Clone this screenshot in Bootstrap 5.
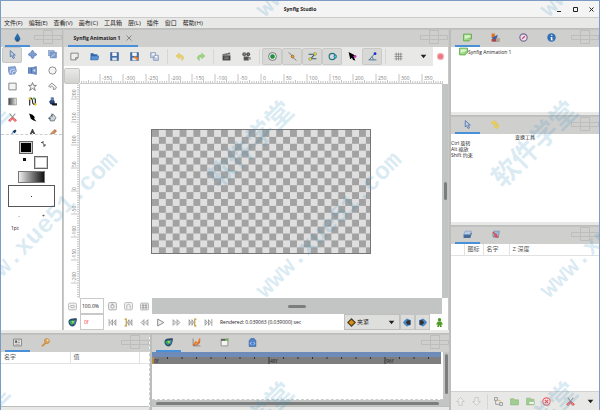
<!DOCTYPE html>
<html lang="zh-CN">
<head>
<meta charset="utf-8">
<meta name="viewport" content="width=device-width, initial-scale=1">
<title>Synfig Studio</title>
<link href="https://cdn.jsdelivr.net/npm/bootstrap@5.3.0/dist/css/bootstrap.min.css" rel="stylesheet">
<style>
:root{--line:#bcbebc;--tabs:#cfcfce;--bar:#e8e8e6;--accent:#4a90d9;--soft:#c3c5c4}
body{font:5px/6px "Open Sans","Noto Sans CJK SC",sans-serif;color:#1c2022;background:#fff}
button,input,select{font:inherit;color:inherit}
button{border:0;background:none;padding:0;display:flex;align-items:center;justify-content:center}
svg{display:block;flex:none}
.ic{width:9px;height:9px;overflow:visible}
.win{border:1px solid #7c9cc3;border-bottom:0}
.titlebar{height:16px;background:#f4f4f4}
.titlebar h1{font-size:5px;font-weight:700;line-height:16px}
.winbtns{gap:7px;padding-right:3px}
.winbtns button{width:9px;height:16px}
.menubar{height:12px;font-size:6px;background:var(--bar);border-top:1px solid #ccc;border-bottom:1px solid var(--line);padding-left:3px;gap:6px}
.docktabs{height:18px;background:var(--tabs);padding-left:4px;gap:3px;border-top:1px solid #c2c2c2}
.docktabs .tab{width:25px;border-bottom:2px solid transparent}
.docktabs .tab.on{border-color:var(--accent)}
.docktabs .doc{width:70px;font-weight:700;gap:6px;border-bottom:2px solid var(--accent)}
.side{width:62px;border-right:1px solid var(--line)}
.toolclip{height:88px;overflow:hidden;border-bottom:1px dashed #ccc}
.tools{height:94px;display:grid;grid-template-columns:repeat(3,20px);grid-auto-rows:1fr;padding-left:1px}
.on-tool{background:#d8d8d6;border:1px solid #c6c6c4;border-radius:2px}
.prev{padding:6px 6px 0;gap:2px}
.sw{width:14px;height:13px;border:1px solid #666;box-shadow:inset 0 0 0 1px #ccc}
.sw.k{background:#000}.sw.w{background:#fff}
.grad{width:27px;height:12px;border:1px solid #777;background:linear-gradient(90deg,#eee,#111)}
.brush{width:47px;height:22px;border:1px solid #555}
.toolbar-main{height:19px;background:var(--bar)}
.toolbar-main button{width:20px;height:17px}
.toolbar-main .on{background:#d8d8d6;border:1px solid #c9c9c7;border-radius:2px}
.vsep{width:6px;display:flex;justify-content:center}
.vsep::after{content:"";width:1px;height:15px;background:#d6d6d4}
.corner{width:16px;height:16px;background:linear-gradient(#e9e9e9,#d2d2d0);border:1px solid #c6c6c4;border-radius:2px}
.rulx{height:18px;border-bottom:1px solid #ccc}
.ruly{width:16px;border-right:1px solid #ccc;overflow:hidden}
.rulx svg,.ruly svg{width:100%;height:100%}
.rul text{font-size:5px;fill:#7f7f7f}
.rul line{stroke:#c4c4c4;stroke-width:1}
.stage{width:220px;height:125px;border:1px solid #777}
.track{background:var(--soft)}
.thumb{background:#7b7e7d;border-radius:2px}
.botrow{height:16px}
.botrow .c16{width:16px;height:16px}
.entry{width:24px;height:16px;border:1px solid #c9c9c7;padding:0 3px;background:#fff;border-radius:0}
.entry.zoomv{padding:0 1px}
.entry.frame{color:#f33}
.combo{position:relative;width:56px;background:#dededc;border:1px solid #bfbfbd}
.combo select{appearance:none;border:0;background:none;width:100%;height:100%;padding:0 0 0 12px;font-size:6px}
.combo svg{position:absolute;top:3px;pointer-events:none}
.fbtn{width:15px;background:#dcdcda;border:1px solid #c4c4c2}
.gap-bar{height:4px;background:var(--bar);border-bottom:1px solid var(--line)}
.lower{height:76px}
.params{width:149px;flex:none;border-right:1px dashed #ccc}
.grid-t{width:100%;font-size:6px;color:#555;border-bottom:1px solid #e2e2e2;white-space:nowrap}
.grid-t th{font-weight:400;height:11px;padding:0 3px;border-right:1px solid #e2e2e2}
.foot{height:4px;background:var(--bar);border-top:1px solid var(--line)}
.blue{height:5px;background:#6f8cb9}
.frames{height:7px;background:#7e7e7e}
.frames text{font-size:5px;fill:#222}
.dock{width:150px;flex:none;border-left:2px solid var(--line)}
.ptools{height:19px;background:var(--bar);border-top:1px solid #d2d2d0;padding:0 1px}
.ptools button{width:16px;height:17px}
.marks{position:absolute;inset:0;width:100%;height:100%;pointer-events:none;overflow:hidden}
.marks text{fill:#3f96c4;fill-opacity:.2;font-weight:700}
.marks .la{font-family:"Liberation Mono",monospace;font-size:25px}
.marks .cj{font-family:"Noto Sans CJK SC",sans-serif;font-size:27px}
</style>
<script src="https://cdn.jsdelivr.net/npm/bootstrap@5.3.0/dist/js/bootstrap.bundle.min.js"></script>
</head>
<body>
<svg width="0" height="0" class="position-absolute" aria-hidden="true">
<defs>
<symbol id="drop" viewBox="0 0 16 16"><path d="M8 0C9 4 14 7 13 11.500C12 14 10 14 8 13C6 14 4 14 3 11.500C2 7 7 4 8 0Z" fill="#2a6ca8"/><path d="M8 10L5 15H11Z" fill="#173f68"/></symbol>
<symbol id="arrow" viewBox="0 0 16 16"><path d="M4 1L13 9H9L11.500 14L9 15L6.500 10L4 12.500Z" fill="#b9cbe6" stroke="#5575ab" stroke-width="1.500"/></symbol>
<symbol id="move" viewBox="0 0 16 16"><path d="M8 0L11 4H10V6H12V5L16 8L12 11V10H10V12H11L8 16L5 12H6V10H4V11L0 8L4 5V6H6V4H5Z" fill="#7f9fd3" stroke="#4c6ca8"/></symbol>
<symbol id="scale" viewBox="0 0 16 16"><path d="M0 1H11V10H0Z" fill="#a9bee0" stroke="#6482b8"/><path d="M4 4H15V14H4Z" fill="#7f9ccd" stroke="#5a79b0"/><path d="M6 12L12 7" stroke="#dfe8f6" stroke-width="1.500"/></symbol>
<symbol id="rotate" viewBox="0 0 16 16"><path d="M0 2L13 1L15 9L12 14L3 15L1 10Z" fill="#86a3d3" stroke="#5f7fb5"/><path d="M4 13C3 6 7 5 12 6M8 14C7 10 9 9 14 9" fill="none" stroke="#e8eef8" stroke-width="1.400"/></symbol>
<symbol id="mirror" viewBox="0 0 16 16"><path d="M0 3H6V13H0ZM6 3L15 1V15L6 13Z" fill="#6e90c9" stroke="#4668a4"/><path d="M8 8L13 5V11Z" fill="#c6d6ee"/></symbol>
<symbol id="circle" viewBox="0 0 16 16"><circle cx="8" cy="8" r="6.500" fill="#f4f4f4" stroke="#777" stroke-width="1.400"/></symbol>
<symbol id="rect" viewBox="0 0 16 16"><path d="M1.500 2H14.500V14H1.500Z" fill="#f3f3f3" stroke="#777" stroke-width="1.500"/></symbol>
<symbol id="star" viewBox="0 0 16 16"><path d="M8 1L10 6H15L11 9.500L13 15L8 11.500L3 15L5 9.500L1 6H6Z" fill="#f3f3f3" stroke="#666" stroke-width="1.400"/></symbol>
<symbol id="poly" viewBox="0 0 16 16"><path d="M1 7L7 2L15 9L13 13H9L10 10L6 7L4 10Z" fill="#f3f3f3" stroke="#777" stroke-width="1.400"/></symbol>
<symbol id="gradi" viewBox="0 0 16 16"><linearGradient id="gg"><stop offset="0" stop-color="#444"/><stop offset="1" stop-color="#eee"/></linearGradient><path d="M1 2H15V14H1Z" fill="url(#gg)" stroke="#777"/></symbol>
<symbol id="spline" viewBox="0 0 16 16"><path d="M3 15V3C6 0 8 4 8 8S11 15 13 12V3" fill="none" stroke="#222" stroke-width="2"/><path d="M1 1H5V5H1ZM11 11H15V15H11Z" fill="#e2c62c"/><path d="M9 1H13V4H9Z" fill="#4b9a4a"/></symbol>
<symbol id="ink" viewBox="0 0 16 16"><path d="M5 1H10V5L12 8V13H4L2 8L5 5Z" fill="#2c4578"/><path d="M5 11H16V15H8Z" fill="#101820"/><path d="M6 2L8 6" stroke="#7da2d8" stroke-width="2"/></symbol>
<symbol id="cut" viewBox="0 0 16 16"><path d="M3 1L11 11M13 1L5 11" stroke="#999" stroke-width="1.800"/><path d="M6 9L1 13L4 15L8 10L12 15L15 13L10 9Z" fill="#f2a0a0" stroke="#dc4040" stroke-width="1.500"/></symbol>
<symbol id="feather" viewBox="0 0 16 16"><path d="M2 1L8 3L12 7L11 10L15 15L9 13L5 10Z" fill="#000"/></symbol>
<symbol id="bucket" viewBox="0 0 16 16"><path d="M3 7L9 2L14 8L11 14H4Z" fill="#ccd4df" stroke="#566" stroke-width="1.400"/><path d="M2 8C0 11 3 12 4 9M7 1V7" fill="none" stroke="#345" stroke-width="1.500"/></symbol>
<symbol id="pipette" viewBox="0 0 16 16"><path d="M2 14L10 5" stroke="#85aee0" stroke-width="2.500"/><path d="M8 4L12 8L15 3L13 1Z" fill="#16365e"/></symbol>
<symbol id="texta" viewBox="0 0 16 16"><path d="M2 15L8 2L14 15M4 11H12" fill="none" stroke="#444" stroke-width="3"/></symbol>
<symbol id="pencil" viewBox="0 0 16 16"><path d="M1 15L3 10L12 1L15 4L6 13Z" fill="#c9905b" stroke="#94592b"/><path d="M11 2L14 5L15 1Z" fill="#d66"/></symbol>
<symbol id="new" viewBox="0 0 16 16"><path d="M1.500 2H14.500V10L10 14H1.500ZM14 10H10V14" fill="#eee" stroke="#777" stroke-width="1.500"/></symbol>
<symbol id="open" viewBox="0 0 16 16"><path d="M1 2H6L7 4H13V7H3V13H1Z" fill="#3268ab"/><path d="M3 7H16L14 14H1Z" fill="#5d94d4" stroke="#3268ab"/></symbol>
<symbol id="save" viewBox="0 0 16 16"><path d="M1 1H15V15H1Z" fill="#4470ac" stroke="#34568a"/><path d="M4 1H12V7H4Z" fill="#f6f8fb"/><path d="M4 10H12V15H4Z" fill="#dfe5ed"/></symbol>
<symbol id="saveas" viewBox="0 0 16 16"><use href="#save"/><path d="M8 8L14 13" stroke="#f2801b" stroke-width="4"/></symbol>
<symbol id="saveall" viewBox="0 0 16 16"><path d="M1 1H10V10H1ZM6 6H15V15H6Z" fill="#bccbe0" stroke="#8ea2c0" stroke-width="1.500"/><path d="M4 2H8V6H4ZM9 7H13V10H9Z" fill="#f6f8fb"/></symbol>
<symbol id="undo" viewBox="0 0 16 16"><path d="M6 2L0 7L6 12V9C10 9 11 11 10 15C16 12 14 5 6 5Z" fill="#e8d06a" stroke="#dcc25a"/></symbol>
<symbol id="redo" viewBox="0 0 16 16"><path d="M10 2L16 7L10 12V9C6 9 5 11 6 15C0 12 2 5 10 5Z" fill="#9ed481" stroke="#90c873"/></symbol>
<symbol id="clap" viewBox="0 0 16 16"><path d="M1 6H15V15H1Z" fill="#444"/><path d="M1 4L14 1L15 4L1 6Z" fill="#666"/><path d="M4 3L6 5M9 2L11 4M4 9H12M4 12H12" stroke="#bbb"/></symbol>
<symbol id="cam" viewBox="0 0 16 16"><circle cx="4" cy="4" r="3.500" fill="#666"/><circle cx="11" cy="4" r="3.500" fill="#555"/><path d="M3 8H12V10L15 9V14L12 12V15H3Z" fill="#555"/><path d="M4 4H5M11 4H12M11 12H14" stroke="#ccd" stroke-width="1.500"/></symbol>
<symbol id="hpos" viewBox="0 0 16 16"><circle cx="8" cy="8" r="7" fill="#e6ece6" stroke="#555" stroke-width="1.300"/><circle cx="8" cy="8" r="3.500" fill="#1d9c2c" stroke="#075"/></symbol>
<symbol id="htan" viewBox="0 0 16 16"><path d="M1 1L6 5L9 10L15 15" fill="none" stroke="#777" stroke-width="1.500"/><circle cx="8" cy="8" r="2.500" fill="#f09a2c" stroke="#84501a"/></symbol>
<symbol id="hwid" viewBox="0 0 16 16"><path d="M1 4H11M5 12H15M4 13L12 4" stroke="#365a66" stroke-width="2"/><circle cx="12.500" cy="3.500" r="2.500" fill="#f4ea3c" stroke="#776"/><circle cx="4" cy="12.500" r="2.500" fill="#f4ea3c" stroke="#776"/></symbol>
<symbol id="hrad" viewBox="0 0 16 16"><circle cx="7.500" cy="8" r="5.500" fill="none" stroke="#1e7387" stroke-width="2"/><circle cx="13" cy="8" r="2.500" fill="#35d4e4" stroke="#146"/></symbol>
<symbol id="hang" viewBox="0 0 16 16"><path d="M1 14H15M2 14L12 3M9 14C9 10 8 9 6 9" fill="none" stroke="#4d7390" stroke-width="1.700"/><circle cx="12.500" cy="3" r="2.500" fill="#1b2bd0"/></symbol>
<symbol id="harr" viewBox="0 0 16 16"><path d="M1 0L13 6L10 8L13 15L9 14L7 10L4 13Z" fill="#000"/><circle cx="12.500" cy="8" r="2.500" fill="#c335c3"/></symbol>
<symbol id="grid" viewBox="0 0 16 16"><path d="M4 1V15M8 1V15M12 1V15M1 4H15M1 8H15M1 12H15" stroke="#777" stroke-width="1.200"/></symbol>
<symbol id="down" viewBox="0 0 16 16"><path d="M3 5H13L8 11Z" fill="#222"/></symbol>
<symbol id="rec" viewBox="0 0 16 16"><circle cx="8" cy="8" r="5.500" fill="#e97880" stroke="#f3b9bc" stroke-width="2"/></symbol>
<symbol id="canvas" viewBox="0 0 16 16"><path d="M1 2H15V10L11 14H1Z" fill="#a3dc88" stroke="#5aa545" stroke-width="1.500"/><path d="M3 4H13V7L3 10Z" fill="#d9f3cd"/><path d="M15 10H11V14Z" fill="#f2fbef" stroke="#5aa545"/></symbol>
<symbol id="layerset" viewBox="0 0 16 16"><path d="M1 1H7V9H1Z" fill="#e37420"/><path d="M2 8L12 3L10 12L15 15H3Z" fill="#3e64ae"/><path d="M9 9H16V15H9Z" fill="#b9a48d"/><path d="M1 11H8V15H1Z" fill="#c93c2b"/></symbol>
<symbol id="compass" viewBox="0 0 16 16"><circle cx="8" cy="8" r="6.500" fill="#e8e4f2" stroke="#77648f" stroke-width="2"/><path d="M4 12L7 7L12 4L9 9Z" fill="#d5354e"/></symbol>
<symbol id="info" viewBox="0 0 16 16"><circle cx="8" cy="8" r="7.500" fill="#326fb7"/><path d="M7 3H9.500V5H7ZM6 7H9.500V12H11V13H6V12H7V8H6Z" fill="#fff"/></symbol>
<symbol id="hist" viewBox="0 0 16 16"><path d="M6 1L0 5L6 9V7H9V3H6ZM10 8V6C15 6 15 14 10 14V16L5 12L10 9V11C12 11 12 8 10 8Z" fill="#ecd258" stroke="#dcc04a"/></symbol>
<symbol id="layers" viewBox="0 0 16 16"><path d="M1 9L4 5H16L13 14H1Z" fill="#466a9b"/><path d="M1 8L4 2H15L13 8Z" fill="#b9cde6" stroke="#7895bb"/></symbol>
<symbol id="layerlib" viewBox="0 0 16 16"><path d="M3 8L5 2H15L13 13H4Z" fill="#9db6d6" stroke="#61809f"/><path d="M3 4L11 10M5 10L13 13" stroke="#d44d48" stroke-width="2.500"/></symbol>
<symbol id="par" viewBox="0 0 16 16"><path d="M1 2H15V14H1Z" fill="#eee" stroke="#777" stroke-width="1.500"/><path d="M4 5H7V8H4ZM9 5H12M9 8H12M4 11H12" fill="#555" stroke="#555"/></symbol>
<symbol id="key" viewBox="0 0 16 16"><path d="M1 13L8 7L10 9L4 15H1Z" fill="#d19248"/><circle cx="10.500" cy="5.500" r="4.500" fill="#e0a55b" stroke="#bd7d35"/><circle cx="12" cy="4" r="1.300" fill="#fff"/></symbol>
<symbol id="synfig" viewBox="0 0 16 16"><path d="M1 5C3 1 10 0 16 1C15 9 13 15 8 15C3 15 0 10 1 5Z" fill="#2d4a6a"/><path d="M2 6L9 3L8 13C5 12 3 9 2 6Z" fill="#2aa56d"/><path d="M6 6L13 4L9 11Z" fill="#9fdc4a"/><path d="M10 9L15 2L12 13Z" fill="#3c79c7"/></symbol>
<symbol id="curves" viewBox="0 0 16 16"><path d="M2 1V14H15" stroke="#555" fill="none"/><path d="M2 11C6 14 5 5 8 8S12 8 14 1" fill="none" stroke="#ee7c1d" stroke-width="3"/><path d="M3 13C8 12 12 13 14 6" fill="none" stroke="#b5422b" stroke-width="1.500"/></symbol>
<symbol id="cmeta" viewBox="0 0 16 16"><path d="M2 2H14V14H2Z" fill="#f4f4f0" stroke="#888" stroke-width="1.500"/><path d="M2 2H10V5H2Z" fill="#555"/><path d="M10 1H15V5H10Z" fill="#67b34c"/></symbol>
<symbol id="lib" viewBox="0 0 16 16"><path d="M2 5L5 1H11L14 5V15H2Z" fill="#4f84cc" stroke="#315a96"/><path d="M6 7L4 10L6 12M10 7L12 10L10 12" fill="none" stroke="#cfe0f6" stroke-width="1.500"/></symbol>
<symbol id="zout" viewBox="0 0 16 16"><rect x="1" y="2" width="14" height="12" rx="2" fill="#f3f3f3" stroke="#aaa" stroke-width="1.300"/><ellipse cx="8" cy="8" rx="4" ry="2" fill="none" stroke="#888"/></symbol>
<symbol id="zfit" viewBox="0 0 16 16"><rect x="1" y="1" width="14" height="13" rx="2" fill="#f1f1f1" stroke="#999" stroke-width="1.300"/><circle cx="8" cy="8" r="3" fill="none" stroke="#777"/><path d="M6 4H10" stroke="#777"/></symbol>
<symbol id="znorm" viewBox="0 0 16 16"><rect x="1" y="1" width="14" height="13" rx="2" fill="#f3f3f3" stroke="#aaa" stroke-width="1.300"/><path d="M5 12V7C5 3 11 3 11 7V12" fill="none" stroke="#888"/></symbol>
<symbol id="zall" viewBox="0 0 16 16"><rect x="1" y="2" width="14" height="12" rx="2" fill="#f1f1f1" stroke="#999" stroke-width="1.300"/><path d="M4 5H7V7H4ZM9 5H12V7H9ZM4 9H7V11H4ZM9 9H12V11H9Z" fill="none" stroke="#777"/></symbol>
<symbol id="first" viewBox="0 0 16 16"><path d="M2 2V14M8 3L4 8L8 13ZM14 3L10 8L14 13Z" fill="#eee" stroke="#888" stroke-width="1.400"/></symbol>
<symbol id="pkey" viewBox="0 0 16 16"><path d="M1 2H4V14H1" fill="none" stroke="#b99a2f" stroke-width="2"/><path d="M9 3L6 8L9 13ZM14 3L11 8L14 13Z" fill="#eee" stroke="#888" stroke-width="1.400"/></symbol>
<symbol id="pfr" viewBox="0 0 16 16"><path d="M7 3L2 8L7 13ZM14 3L9 8L14 13Z" fill="#eee" stroke="#888" stroke-width="1.400"/></symbol>
<symbol id="play" viewBox="0 0 16 16"><path d="M3 2L14 8L3 14Z" fill="#f3f3f3" stroke="#777" stroke-width="1.500"/></symbol>
<symbol id="diamond" viewBox="0 0 16 16"><path d="M8 0L16 8L8 16L0 8Z" fill="#4a3d22"/><path d="M8 3L13 8L8 13L3 8Z" fill="#d98d14"/></symbol>
<symbol id="lockp" viewBox="0 0 16 16"><path d="M7 1L14 4V12L7 15L3 12L0 8L3 4Z" fill="#4a86c6"/><path d="M8 4H13V12H8L5 8Z" fill="#333"/></symbol>
<symbol id="man" viewBox="0 0 16 16"><circle cx="8" cy="3" r="3" fill="#4c9a22"/><path d="M5 6H11L14 11L12 12L11 10L12 16H9L8 12L7 16H4L5 10L4 12L2 11Z" fill="#4c9a22"/></symbol>
<symbol id="up" viewBox="0 0 16 16"><path d="M8 1L15 8H11V15H5V8H1Z" fill="#ececea" stroke="#c3c3c1" stroke-width="1.400"/></symbol>
<symbol id="group" viewBox="0 0 16 16"><path d="M1 1H6V6H1ZM10 10H15V15H10ZM3 6V13H10" fill="#eee" stroke="#888" stroke-width="1.400"/><path d="M6 6H11V10" stroke="#c9a54a" fill="none"/></symbol>
<symbol id="folder" viewBox="0 0 16 16"><path d="M1 3H7L8 5H15V14H1Z" fill="#a2cd92" stroke="#88b478"/></symbol>
<symbol id="dup" viewBox="0 0 16 16"><path d="M1 2H8L9 4H14V14H1Z" fill="#a2cd92" stroke="#88b478"/><path d="M5 8H15V13H5Z" fill="#f1f6ee" stroke="#88b478"/></symbol>
<symbol id="del" viewBox="0 0 16 16"><circle cx="8" cy="8" r="6.500" fill="#fbe9e9" stroke="#e66" stroke-width="2"/><path d="M5 5L11 11M11 5L5 11" stroke="#d55" stroke-width="2"/></symbol>
<symbol id="grip" viewBox="0 0 28 14"><path d="M.5 5.500H9.500V9.500H.5ZM9.500 .5H18.500V5.500H9.500ZM9.500 9.500H18.500V13.500H9.500ZM18.500 5.500H27.500V9.500H18.500Z" fill="none" stroke="#bdbdbb"/></symbol>
</defs>
</svg>

<div class="win d-flex flex-column vh-100 position-relative overflow-hidden">
  <header class="titlebar position-relative d-flex align-items-center justify-content-center">
    <h1 class="m-0">Synfig Studio</h1>
    <div class="winbtns d-flex position-absolute end-0">
      <button aria-label="最小化"><svg width="5" height="5"><path d="M0 4.500H4" stroke="#222"/></svg></button>
      <button aria-label="最大化"><svg width="5" height="5"><path d="M.5 .5H4.500V4.500H.5Z" fill="none" stroke="#222"/></svg></button>
      <button aria-label="关闭"><svg width="5" height="5"><path d="M.5 .5L4.500 4.500M4.500 .5L.5 4.500" stroke="#222"/></svg></button>
    </div>
  </header>
  <nav class="menubar d-flex align-items-stretch">
    <button>文件(F)</button><button>编辑(E)</button><button>查看(V)</button><button>画布(C)</button><button>工具箱</button><button>层(L)</button><button>插件</button><button>窗口</button><button>帮助(H)</button>
  </nav>

  <main class="d-flex flex-fill" style="min-height:0">
    <div class="d-flex flex-column flex-fill" style="min-width:0">
      <div class="d-flex flex-fill" style="min-height:0">
        <aside class="side d-flex flex-column">
          <div class="docktabs d-flex"><button class="tab on" aria-label="工具箱"><svg class="ic"><use href="#drop"/></svg></button><svg class="ms-auto" width="28" height="14"><use href="#grip"/></svg></div>
          <div class="toolclip"><div class="tools" id="tools"></div></div>
          <div class="prev d-flex flex-column flex-fill align-items-center">
            <div class="d-flex gap-2 align-self-stretch ps-2"><span class="sw k ms-1"></span><svg width="5" height="6" viewBox="0 0 5 6"><path d="M1 1L4 5M0 2L1 1L3 1M4 3V5H2" fill="none" stroke="#555"/></svg></div>
            <div class="d-flex gap-2 align-self-stretch ps-3"><svg width="3" height="5"><path d="M0 2H3V5H0Z" fill="#111"/></svg><span class="sw w"></span></div>
            <div class="grad"></div>
            <div class="brush d-flex align-items-center justify-content-center"><svg width="1" height="1"><rect width="1" height="1" fill="#333"/></svg></div>
            <div class="d-flex justify-content-around align-self-stretch mt-1"><button>-</button><button>+</button></div>
            <div class="align-self-start mt-1 ps-1">1pt</div>
          </div>
        </aside>
        <section class="d-flex flex-column flex-fill" style="min-width:0;border-left:1px solid #c9c9c7;border-right:1px solid #c9c9c7">
          <div class="docktabs d-flex"><button class="doc"><span>Synfig Animation 1</span><svg width="6" height="6"><path d="M.5 .5L5.500 5.500M5.500 .5L.5 5.500" stroke="#888"/></svg></button><svg class="ms-auto" width="28" height="14"><use href="#grip"/></svg></div>
          <div class="d-flex">
            <div class="toolbar-main d-flex align-items-center flex-fill" id="maintools"></div>
            <button style="width:15px" aria-label="渲染"><svg class="ic"><use href="#rec"/></svg></button>
          </div>
          <div class="d-flex align-items-end">
            <div class="corner"></div>
            <div class="rulx rul flex-fill"><svg id="rx"></svg></div><span style="width:5px"></span>
          </div>
          <div class="d-flex flex-fill">
            <div class="ruly rul"><svg id="ry"></svg></div>
            <div class="flex-fill d-flex align-items-center justify-content-center">
              <div class="stage"><svg width="100%" height="100%"><defs><pattern id="chk" width="13.800" height="13.800" patternUnits="userSpaceOnUse"><rect width="13.800" height="13.800" fill="#dfdfdf"/><path d="M0 0H6.900V6.900H0ZM6.900 6.900H13.800V13.800H6.900Z" fill="#a2a2a2"/></pattern></defs><rect width="100%" height="100%" fill="url(#chk)"/></svg></div>
            </div>
            <div class="track d-flex align-items-center justify-content-center" style="width:6px"><span class="thumb" style="width:3px;height:18px"></span></div>
          </div>
          <div class="botrow d-flex">
            <button class="c16" aria-label="缩小"><svg class="ic"><use href="#zout"/></svg></button>
            <input class="entry zoomv" aria-label="缩放" value="100.0%">
            <div class="d-flex" id="zooms"></div>
            <div class="track flex-fill d-flex align-items-center justify-content-center"><span class="thumb" style="width:18px;height:3px"></span></div><span style="width:6px"></span>
          </div>
          <div class="botrow d-flex align-items-stretch">
            <button class="c16" aria-label="帧"><svg class="ic"><use href="#synfig"/></svg></button>
            <input class="entry frame" aria-label="当前帧" value="0f">
            <div class="d-flex" id="plays"></div>
            <div class="flex-fill align-self-center ps-1 text-nowrap">Rendered: 0.039063 (0.039000) sec</div>
            <div class="combo"><svg class="ic" style="left:2px"><use href="#diamond"/></svg><select aria-label="插值"><option>夹紧</option></select><svg class="ic" style="right:3px"><use href="#down"/></svg></div>
            <button class="fbtn" aria-label="过去关键帧"><svg class="ic"><use href="#lockp"/></svg></button>
            <button class="fbtn" aria-label="未来关键帧"><svg class="ic"><use href="#lockp" transform="matrix(-1 0 0 1 9 0)"/></svg></button>
            <button style="width:18px" aria-label="动画编辑模式"><svg class="ic"><use href="#man"/></svg></button>
          </div>
        </section>
      </div>
      <div class="gap-bar"></div>
      <div class="lower d-flex">
        <section class="params d-flex flex-column">
          <div class="docktabs d-flex"><button class="tab on" aria-label="参数"><svg class="ic"><use href="#par"/></svg></button><button class="tab" aria-label="关键帧"><svg class="ic"><use href="#key"/></svg></button><svg class="ms-auto" width="28" height="14"><use href="#grip"/></svg></div>
          <table class="grid-t"><thead><tr><th style="width:69px">名字</th><th style="width:69px">值</th><th class="border-0"></th></tr></thead></table>
          <div class="flex-fill"></div><div class="foot"></div>
        </section>
        <section class="d-flex flex-column flex-fill" style="border-left:2px solid #bcbebc">
          <div class="docktabs d-flex"><button class="tab on" aria-label="时间轨"><svg class="ic"><use href="#synfig"/></svg></button><button class="tab" aria-label="曲线"><svg class="ic"><use href="#curves"/></svg></button><button class="tab" aria-label="元数据"><svg class="ic"><use href="#cmeta"/></svg></button><button class="tab" aria-label="库"><svg class="ic"><use href="#lib"/></svg></button><svg class="ms-auto" width="28" height="14"><use href="#grip"/></svg></div>
          <div class="d-flex flex-fill">
            <div class="flex-fill d-flex flex-column">
              <div style="padding:0 2px 0 0"><div class="blue"></div><div class="frames"><svg id="fr" width="100%" height="7"></svg></div></div>
              <div class="flex-fill" style="border-bottom:1px dashed #ccc"></div>
              <div class="track d-flex align-items-center px-1" style="height:6px"><span class="thumb flex-fill" style="height:3px"></span></div>
            </div>
            <div class="track d-flex justify-content-center" style="width:6px;padding-top:2px"><span class="thumb" style="width:3px;height:40px"></span></div>
          </div>
          <div class="foot"></div>
        </section>
      </div>
    </div>

    <aside class="dock d-flex flex-column">
      <div class="docktabs d-flex"><button class="tab on" aria-label="画布"><svg class="ic"><use href="#canvas"/></svg></button><button class="tab" aria-label="调色板"><svg class="ic"><use href="#layerset"/></svg></button><button class="tab" aria-label="导航"><svg class="ic"><use href="#compass"/></svg></button><button class="tab" aria-label="信息"><svg class="ic"><use href="#info"/></svg></button><svg class="ms-auto" width="28" height="14"><use href="#grip"/></svg></div>
      <div style="height:65px;padding-left:8px"><div class="d-flex align-items-center"><svg class="ic"><use href="#canvas"/></svg><span>Synfig Animation 1</span></div></div>
      <div class="gap-bar"></div>
      <div class="docktabs d-flex"><button class="tab on" aria-label="工具选项"><svg class="ic"><use href="#arrow"/></svg></button><button class="tab" aria-label="历史"><svg class="ic"><use href="#hist"/></svg></button><svg class="ms-auto" width="28" height="14"><use href="#grip"/></svg></div>
      <div style="height:88px"><div class="text-center">变换工具</div><div>Ctrl 旋转</div><div>Alt 缩放</div><div>Shift 约束</div></div>
      <div class="gap-bar"></div>
      <div class="docktabs d-flex"><button class="tab on" aria-label="图层"><svg class="ic"><use href="#layers"/></svg></button><button class="tab" aria-label="图层库"><svg class="ic"><use href="#layerlib"/></svg></button><svg class="ms-auto" width="28" height="14"><use href="#grip"/></svg></div>
      <table class="grid-t"><thead><tr><th style="width:13px"></th><th style="width:18px">图标</th><th style="width:26px">名字</th><th class="border-0">Z 深度</th></tr></thead></table>
      <div class="flex-fill"></div>
      <div class="ptools d-flex align-items-center" id="ltools"></div>
    </aside>
  </main>

  <svg class="marks" aria-hidden="true" id="marks"></svg>
</div>

<script>
const NS = 'http://www.w3.org/2000/svg';
const el = (p, n, a, t) => { const e = document.createElementNS(NS, n); for (const k in a) e.setAttribute(k, a[k]); if (t) e.textContent = t; p.append(e); return e; };
const btn = (i, c) => `<button class="${c || ''}" aria-label="${i}"><svg class="ic"><use href="#${i}"/></svg></button>`;
const put = (id, h) => document.getElementById(id).innerHTML = h;

put('tools', ['arrow','move','scale','rotate','mirror','circle','rect','star','poly','gradi','spline','ink','cut','feather','bucket','pipette','texta','pencil'].map((n, i) => btn(n, i ? '' : 'on-tool')).join(''));
const sep = '<span class="vsep"></span>';
const list = s => s.split(' ').map(n => n === '|' ? sep : n[0] === '*' ? btn(n.slice(1), 'on') : btn(n)).join('');
put('maintools', list('new open save saveas saveall | undo redo | clap cam | *hpos *htan *hwid *hrad harr *hang | grid') + btn('down', 'ms-auto'));
put('zooms', ['zfit','znorm','zall'].map(n => btn(n, 'c16')).join(''));
const flip = n => `<button class="c16" aria-label="${n}"><svg class="ic"><use href="#${n}" transform="matrix(-1 0 0 1 9 0)"/></svg></button>`;
put('plays', btn('first','c16') + btn('pkey','c16') + btn('pfr','c16') + btn('play','c16') + flip('pfr') + flip('pkey') + flip('first'));
put('ltools', btn('up') + '<button aria-label="down"><svg class="ic"><use href="#up" transform="matrix(1 0 0 -1 0 9)"/></svg></button>' + sep + list('group folder dup del') + btn('cut','ms-2') + btn('down','ms-auto'));

// rulers: 50 units span 23 px, zero sits at the middle of the view
const step = 23;
const rx = document.getElementById('rx'), w = rx.clientWidth, cx = Math.round(w / 2) - 1;
for (let i = -100; i <= 100; i++) {
  const x = cx + i * step / 10, major = i % 10 === 0;
  if (x < 0 || x > w) continue;
  el(rx, 'line', { x1: x, x2: x, y1: major ? 8 : i % 5 ? 15 : 14, y2: 18 });
  if (major && x + 14 < w) el(rx, 'text', { x: x + 2, y: 14 }, String(i * 5));
}
const ry = document.getElementById('ry'), h = ry.clientHeight, cy = Math.round(h / 2);
for (let i = -60; i <= 60; i++) {
  const y = cy - i * step / 10, major = i % 10 === 0;
  if (y < 0 || y > h) continue;
  el(ry, 'line', { y1: y, y2: y, x1: major ? 7 : 13, x2: 16 });
  if (major) el(ry, 'text', { transform: `translate(12 ${y - 1}) rotate(-90)` }, String(i * 5));
}
const fr = document.getElementById('fr');
for (let i = 0; i <= 19; i++) {
  const x = 1 + i * 14.5, major = i % 8 === 0;
  el(fr, 'line', { x1: x, x2: x, y1: 0, y2: major ? 7 : 2, stroke: i ? '#333' : '#e8a020' });
  if (major) el(fr, 'text', { x: x + 1, y: 6 }, i * 6 + 'f');
}
// repeated diagonal watermark; each tile is 284 by 281 px
const mk = document.getElementById('marks');
for (let c = 0; c < 3; c++) {
  for (const r of [0, 1]) el(mk, 'text', { class: 'la', transform: `translate(${-20 + c * 284} ${17 + r * 281}) rotate(-45)` }, 'www.xue51.com');
  for (const r of [1, 2]) el(mk, 'text', { class: 'cj', transform: `translate(${-66 + c * 284} ${-93 + r * 281}) rotate(-45)` }, '软件学堂');
}
</script>
</body>
</html>
